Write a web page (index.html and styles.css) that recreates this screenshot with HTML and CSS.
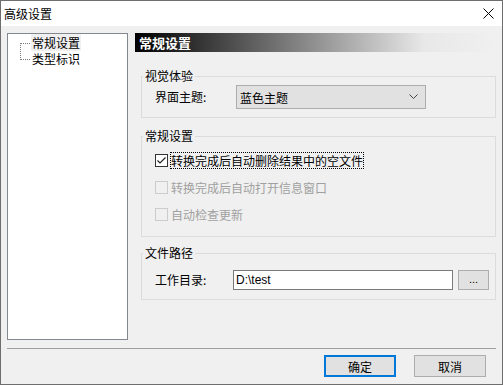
FILE: index.html
```html
<!DOCTYPE html>
<html lang="zh">
<head>
<meta charset="utf-8">
<title>高级设置</title>
<link rel="stylesheet" href="styles.css">
</head>
<body>
<div class="window">
  <div class="titlebar">
    <span class="title">高级设置</span>
    <svg class="close" width="11" height="11" viewBox="0 0 11 11"><path d="M0.5 0.5 L10.5 10.5 M10.5 0.5 L0.5 10.5" stroke="#000" stroke-width="1" fill="none"/></svg>
  </div>
  <div class="main">
    <div class="tree">
      <ul class="tree-list">
        <li class="tree-item selected"><span>常规设置</span></li>
        <li class="tree-item"><span>类型标识</span></li>
      </ul>
    </div>
    <div class="pane">
      <div class="pane-header">常规设置</div>
      <div class="group g1">
        <span class="legend">视觉体验</span>
        <div class="row">
          <span class="label l1">界面主题:</span>
          <div class="combo">
            <span>蓝色主题</span>
            <svg width="9" height="6" viewBox="0 0 9 6"><path d="M0.5 0.5 L4.5 4.5 L8.5 0.5" stroke="#444" stroke-width="1" fill="none"/></svg>
          </div>
        </div>
      </div>
      <div class="group g2">
        <span class="legend">常规设置</span>
        <div class="check-row">
          <span class="box checked"><svg width="11" height="11" viewBox="0 0 11 11"><path d="M1.5 5.5 L4 8 L9.5 2.5" stroke="#222" stroke-width="1.2" fill="none"/></svg></span>
          <span class="check-text focus">转换完成后自动删除结果中的空文件</span>
        </div>
        <div class="check-row disabled">
          <span class="box"></span>
          <span class="check-text">转换完成后自动打开信息窗口</span>
        </div>
        <div class="check-row disabled">
          <span class="box"></span>
          <span class="check-text">自动检查更新</span>
        </div>
      </div>
      <div class="group g3">
        <span class="legend">文件路径</span>
        <div class="row">
          <span class="label l2">工作目录:</span>
          <div class="input">D:\test</div>
          <div class="browse">...</div>
        </div>
      </div>
    </div>
  </div>
  <div class="separator"></div>
  <div class="footer">
    <div class="btn default">确定</div>
    <div class="btn">取消</div>
  </div>
</div>
</body>
</html>
```
FILE: styles.css
```css
* { box-sizing: border-box; }
html, body { margin: 0; padding: 0; }
body {
  font-family: "Noto Sans CJK SC", "Liberation Sans", sans-serif;
  font-size: 12px;
  color: #000;
  background: #f0f0f0;
}
ul { margin: 0; padding: 0; list-style: none; }

.window {
  width: 503px;
  height: 385px;
  border: 1px solid #6e6e6e;
  background: #f0f0f0;
  display: flex;
  flex-direction: column;
}
.titlebar {
  height: 25px;
  background: #fff;
  display: flex;
  align-items: center;
  justify-content: space-between;
  padding: 0 8px 0 3px;
}
.title { font-size: 12px; line-height: 16px; }
.close { display: block; }

.main {
  display: flex;
  padding: 7px 6px 0 6px;
}
.tree {
  width: 121px;
  height: 307px;
  background: #fff;
  border: 1px solid #828790;
  padding-top: 1px;
}
.tree-list {
  position: relative;
  padding-left: 23px;
}
.tree-list::before {
  content: "";
  position: absolute;
  left: 12px;
  top: 8px;
  height: 17px;
  border-left: 1px dotted #7a7a7a;
}
.tree-item {
  position: relative;
  height: 16px;
  line-height: 16px;
}
.tree-item::before {
  content: "";
  position: absolute;
  left: -10px;
  top: 8px;
  width: 9px;
  border-top: 1px dotted #7a7a7a;
}
.tree-item span { padding: 0 1px; }
.tree-item.selected span { background: #f0f0f0; }

.pane {
  flex: 1;
  margin-left: 7px;
}
.pane-header {
  height: 19px;
  background: linear-gradient(to right, #000 0%, #e8e8e8 80%, #f0f0f0 100%);
  color: #fff;
  font-weight: bold;
  font-size: 13px;
  line-height: 19px;
  padding-left: 4px;
}
.group {
  position: relative;
  margin-left: 6px;
  border: 1px solid #dcdcdc;
}
.legend {
  position: absolute;
  left: 1px;
  top: -9px;
  padding: 0 2px 0 2px;
  background: #f0f0f0;
  line-height: 16px;
}
.g1 {
  margin-top: 24px;
  height: 42px;
  padding: 8px 0 0 13px;
}
.g2 {
  margin-top: 18px;
  height: 101px;
  padding: 15px 0 0 13px;
  display: flex;
  flex-direction: column;
  gap: 10px;
}
.g3 {
  margin-top: 16px;
  height: 47px;
  padding: 16px 0 0 13px;
}
.row {
  display: flex;
  align-items: center;
}
.label { line-height: 16px; }
.l1 { width: 81px; }
.l2 { width: 78px; }
.combo {
  width: 190px;
  height: 24px;
  background: #e1e1e1;
  border: 1px solid #adadad;
  display: flex;
  align-items: center;
  justify-content: space-between;
  padding: 0 7px 0 3px;
}
.check-row {
  display: flex;
  align-items: center;
  height: 17px;
}
.box {
  width: 13px;
  height: 13px;
  border: 1px solid #333;
  background: #fff;
  display: flex;
  align-items: center;
  justify-content: center;
}
.box svg { display: block; }
.check-text {
  margin-left: 3px;
  line-height: 15px;
}
.check-text.focus { outline: 1px dotted #000; outline-offset: 0; }
.disabled .box { border-color: #cccccc; background: #f0f0f0; }
.disabled .check-text { color: #a0a0a0; }

.input {
  width: 220px;
  height: 20px;
  background: #fff;
  border: 1px solid #7a7a7a;
  line-height: 18px;
  padding-left: 2px;
  font-family: "Liberation Sans", "Noto Sans CJK SC", sans-serif;
}
.browse {
  margin-left: 5px;
  width: 31px;
  height: 20px;
  background: #e1e1e1;
  border: 1px solid #adadad;
  text-align: center;
  line-height: 16px;
  font-family: "Liberation Sans", sans-serif;
  font-size: 11px;
}

.separator {
  margin: 8px 6px 0 6px;
  height: 1px;
  background: #a0a0a0;
}
.footer {
  display: flex;
  justify-content: flex-end;
  gap: 18px;
  padding: 6px 16px 0 0;
}
.btn {
  width: 72px;
  height: 22px;
  background: #e1e1e1;
  border: 1px solid #adadad;
  display: flex;
  align-items: center;
  justify-content: center;
}
.btn.default { border: 2px solid #0078d7; }
```
